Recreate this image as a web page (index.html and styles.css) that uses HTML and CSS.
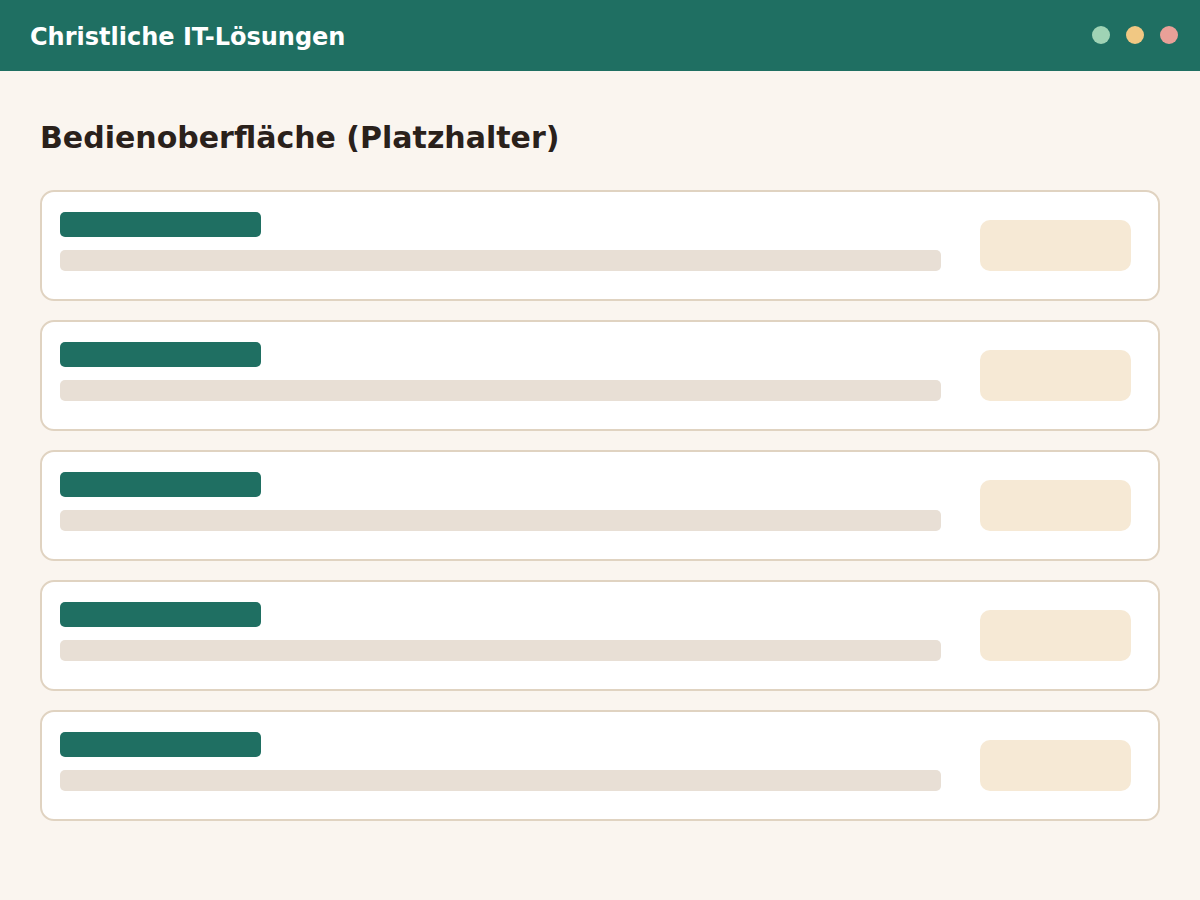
FILE: index.html
```html
<!DOCTYPE html>
<html lang="de">
  <head>
    <meta charset="UTF-8" />
    <meta name="viewport" content="width=device-width, initial-scale=1.0" />
    <title>Christliche IT-Lösungen</title>
    <link rel="stylesheet" href="styles.css">
  </head>
  <body>
    <header class="topbar">
      <h1 class="brand">Christliche IT-Lösungen</h1>
      <div class="dots">
        <span class="dot dot-green"></span>
        <span class="dot dot-yellow"></span>
        <span class="dot dot-red"></span>
      </div>
    </header>

    <main class="content">
      <h2 class="page-title">Bedienoberfläche (Platzhalter)</h2>

      <div class="list">
        <div class="row">
          <div class="row-text">
            <div class="bar-title"></div>
            <div class="bar-line"></div>
          </div>
          <div class="row-action"></div>
        </div>
        <div class="row">
          <div class="row-text">
            <div class="bar-title"></div>
            <div class="bar-line"></div>
          </div>
          <div class="row-action"></div>
        </div>
        <div class="row">
          <div class="row-text">
            <div class="bar-title"></div>
            <div class="bar-line"></div>
          </div>
          <div class="row-action"></div>
        </div>
        <div class="row">
          <div class="row-text">
            <div class="bar-title"></div>
            <div class="bar-line"></div>
          </div>
          <div class="row-action"></div>
        </div>
        <div class="row">
          <div class="row-text">
            <div class="bar-title"></div>
            <div class="bar-line"></div>
          </div>
          <div class="row-action"></div>
        </div>
      </div>
    </main>
  </body>
</html>
```

FILE: styles.css
```css
body {
  font-family: 'DejaVu Sans', sans-serif;
  margin: 0;
  padding: 0;
  background-color: #faf5ef;
  color: #2a211b;
}

.topbar {
  height: 71px;
  background: #1f6f62;
  display: flex;
  align-items: center;
  justify-content: space-between;
  padding: 0 22px 0 30px;
}

.brand {
  margin: 2px 0 0;
  font-size: 24px;
  font-weight: bold;
  color: #ffffff;
}

.dots {
  display: flex;
  gap: 16px;
  margin-top: -2px;
}

.dot {
  width: 18px;
  height: 18px;
  border-radius: 50%;
}

.dot-green { background: #9fd3b5; }
.dot-yellow { background: #f1c883; }
.dot-red { background: #e9a098; }

.content {
  padding: 48px 40px 40px;
}

.page-title {
  margin: 0 0 34px;
  font-size: 30px;
  font-weight: bold;
  line-height: 37px;
  color: #2a211b;
}

/* placeholder rows */
.list {
  display: flex;
  flex-direction: column;
  gap: 19px;
}

.row {
  box-sizing: border-box;
  height: 111px;
  display: flex;
  align-items: center;
  gap: 39px;
  padding: 0 27px 0 18px;
  background: #ffffff;
  border: 2px solid #e0d3c1;
  border-radius: 14px;
}

.row-text {
  flex: 1;
  align-self: flex-start;
  padding-top: 20px;
  display: flex;
  flex-direction: column;
  gap: 13px;
}

.bar-title {
  width: 201px;
  height: 25px;
  background: #1f6f62;
  border-radius: 5px;
}

.bar-line {
  height: 21px;
  background: #e8dfd5;
  border-radius: 5px;
}

.row-action {
  width: 151px;
  height: 51px;
  background: #f6e9d5;
  border-radius: 10px;
}
```
